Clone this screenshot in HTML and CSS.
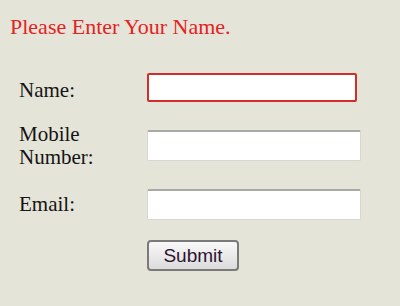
FILE: index.html
```html
<!DOCTYPE html>
<html lang="en">
<head>
    <meta charset="UTF-8">
    <meta name="viewport" content="width=device-width, initial-scale=1.0">
    <title>Contact Form</title>
    <link rel="stylesheet" href="styles.css">
</head>
<body>
    <p class="message">Please Enter Your Name.</p>

    <form class="contact-form" onsubmit="return false;">
        <label for="name" class="first-label">Name:</label>
        <input type="text" id="name" class="error">

        <label for="mobile">Mobile<br>Number:</label>
        <input type="text" id="mobile">

        <label for="email">Email:</label>
        <input type="text" id="email">

        <span></span>
        <button type="submit" class="submit-button">Submit</button>
    </form>
</body>
</html>
```

FILE: styles.css
```css
body {
    font-family: "Liberation Serif", "Times New Roman", serif;
    background-color: #e5e4d8;
    margin: 0;
    padding: 0;
}
.message {
    color: #e2231f;
    font-size: 22px;
    line-height: 25px;
    margin: 0;
    padding: 14px 10px 0;
}
.contact-form {
    display: grid;
    grid-template-columns: 128px 214px;
    grid-template-rows: 31px 46px 31px 31px;
    row-gap: 20px;
    align-items: center;
    margin-top: 33px;
    padding-left: 19px;
}
.contact-form label {
    font-size: 21px;
    line-height: 23px;
    color: #141414;
}
.contact-form .first-label {
    padding-top: 6px;
}
.contact-form input[type="text"] {
    box-sizing: border-box;
    width: 214px;
    height: 31px;
    margin: 0;
    background: #fff;
    border: 1px solid #d6d6d2;
    border-top: 2px solid #a9a9a5;
    border-radius: 2px;
}
.contact-form #mobile {
    margin-top: -2px;
}
.contact-form input.error {
    width: 210px;
    height: 29px;
    border: 2px solid #d42b2b;
    border-radius: 2px;
}
.submit-button {
    box-sizing: border-box;
    width: 92px;
    height: 31px;
    font-family: "Liberation Sans", Arial, sans-serif;
    font-size: 19px;
    color: #2c1432;
    background: linear-gradient(#f8f8f8, #dcdcdc);
    border: 2px solid #7a7a7a;
    border-radius: 4px;
    padding: 0;
    cursor: pointer;
}
```
